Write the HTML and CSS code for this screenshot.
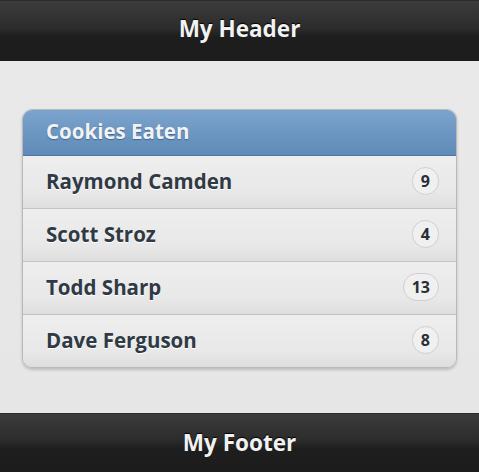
FILE: index.html
```html
<!DOCTYPE html>
<html>
<head>
<meta charset="utf-8">
<link rel="stylesheet" href="styles.css">
</head>
<body>
<div class="page">
  <header class="bar bar-top"><h1 class="bar-title">My Header</h1></header>
  <main class="content">
    <ul class="list">
      <li class="list-divider">Cookies Eaten</li>
      <li class="list-item"><span class="name">Raymond Camden</span><span class="count">9</span></li>
      <li class="list-item"><span class="name">Scott Stroz</span><span class="count">4</span></li>
      <li class="list-item"><span class="name">Todd Sharp</span><span class="count">13</span></li>
      <li class="list-item last"><span class="name">Dave Ferguson</span><span class="count">8</span></li>
    </ul>
  </main>
  <footer class="bar bar-bottom"><h1 class="bar-title">My Footer</h1></footer>
</div>
</body>
</html>
```
FILE: styles.css
```css
html, body {
  margin: 0;
  padding: 0;
  height: 100%;
}
body {
  font-family: "Open Sans", "DejaVu Sans", sans-serif;
  background: #e9e9e9;
}
.page {
  display: flex;
  flex-direction: column;
  height: 472px;
}
.bar {
  background: linear-gradient(to bottom, #3c3c3c 0%, #2c2c2c 45%, #1e1e1e 60%, #1c1c1c 100%);
  border-top: 1px solid #2a2a2a;
  display: flex;
  align-items: center;
  justify-content: center;
}
.bar-top {
  height: 61px;
  box-sizing: border-box;
  padding-bottom: 5px;
}
.bar-bottom {
  height: 59px;
  box-sizing: border-box;
  margin-top: auto;
  padding-bottom: 2px;
}
.bar-title {
  margin: 0;
  font-size: 22.5px;
  font-weight: 700;
  color: #f2f2f2;
  text-shadow: 0 -1px 1px #000;
}
.content {
  padding: 48px 22px 0;
  background: linear-gradient(to bottom, #e9e9e9, #e6e6e6);
  flex: 1;
}
.list {
  list-style: none;
  margin: 0;
  padding: 0;
  border: 1px solid #b9b9b9;
  border-radius: 10px;
  overflow: hidden;
  box-shadow: 0 2px 3px rgba(0,0,0,0.18);
}
.list-divider {
  height: 46px;
  box-sizing: border-box;
  padding: 0 23px 4px;
  display: flex;
  align-items: center;
  background: linear-gradient(to bottom, #7ba3cc 0%, #6d97c3 50%, #608ab7 100%);
  border-bottom: 1px solid #4d77a2;
  color: #f2f2f2;
  font-size: 20.5px;
  font-weight: 700;
  text-shadow: 0 1px 1px #3e6790;
}
.list-item {
  height: 53px;
  box-sizing: border-box;
  padding: 0 17px 3px 23px;
  display: flex;
  align-items: center;
  justify-content: space-between;
  background: linear-gradient(to bottom, #eeeeee 0%, #e8e8e8 70%, #dedede 100%);
  border-bottom: 1px solid #c3c3c3;
  color: #2f3a44;
  font-size: 20.5px;
  font-weight: 700;
  text-shadow: 0 1px 0 #fff;
}
.list-item.last {
  border-bottom: none;
  height: 52px;
}
.count {
  min-width: 26px;
  height: 28px;
  box-sizing: border-box;
  padding: 0 8px;
  border: 1px solid #cfcfcf;
  border-radius: 14px;
  background: #f0f0f0;
  display: flex;
  align-items: center;
  justify-content: center;
  font-size: 16px;
  font-weight: 700;
  color: #2a2f36;
  text-shadow: none;
}
```
